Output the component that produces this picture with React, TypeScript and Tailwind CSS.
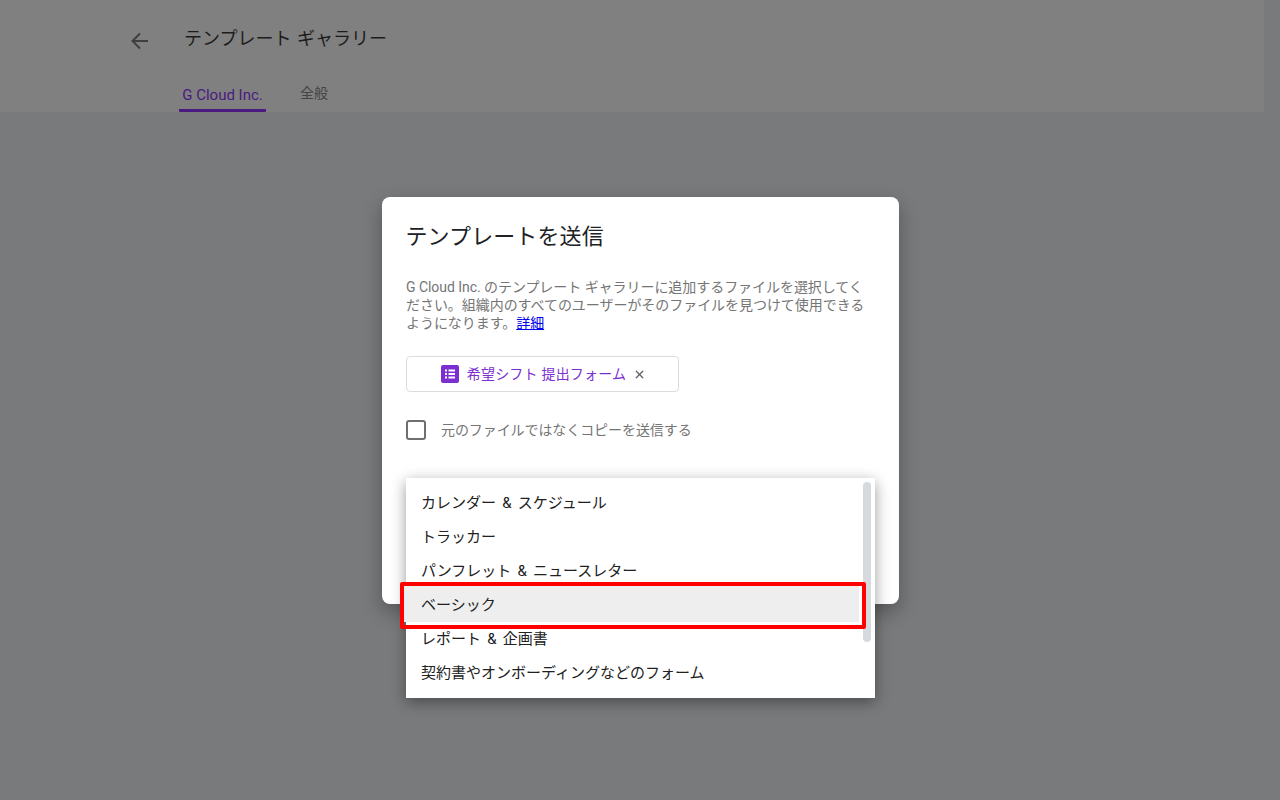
import { X } from 'lucide-react';

const categories = [
  'カレンダー & スケジュール',
  'トラッカー',
  'パンフレット & ニュースレター',
  'ベーシック',
  'レポート & 企画書',
  '契約書やオンボーディングなどのフォーム',
];

function FormsIcon() {
  return (
    <svg width="18" height="18" viewBox="0 0 18 18" className="shrink-0">
      <rect width="18" height="18" rx="2" fill="#7b2fd0" />
      <rect x="4" y="4.5" width="2" height="2" fill="#fff" />
      <rect x="7.5" y="4.5" width="6.5" height="2" fill="#fff" />
      <rect x="4" y="8" width="2" height="2" fill="#fff" />
      <rect x="7.5" y="8" width="6.5" height="2" fill="#fff" />
      <rect x="4" y="11.5" width="2" height="2" fill="#fff" />
      <rect x="7.5" y="11.5" width="6.5" height="2" fill="#fff" />
    </svg>
  );
}

export default function App() {
  return (
    <div className="relative h-[800px] w-[1280px] overflow-hidden bg-[#797a7c] font-['Roboto','Noto_Sans_CJK_JP',sans-serif]">
      <header className="h-[112px] w-[1264px] bg-[#808080]">
        <div className="flex h-[75px] items-start pl-[129px] pt-[29px]">
          <svg width="22" height="24" viewBox="0 0 22 24" className="text-[#3f3f3f]" fill="none" stroke="currentColor" strokeWidth="2">
            <path d="M19 12H4M11 4.500 3.500 12l7.500 7.500" />
          </svg>
          <h1 className="ml-[33px] mt-px text-lg leading-[18px] text-[#1c1c1c] [word-spacing:1px]">テンプレート ギャラリー</h1>
        </div>
        <nav className="flex h-[37px] pl-[179px]">
          <div className="flex h-[37px] w-[87px] items-center justify-center rounded-b-[1px] border-b-[3px] border-[#4a1a80] pt-[7px] text-[15px] text-[#4a1a80]">G Cloud Inc.</div>
          <div className="ml-[34px] pt-[8px] text-sm leading-5 text-[#444444]">全般</div>
        </nav>
      </header>

      <div className="absolute left-[382px] top-[197px] h-[407px] w-[517px] rounded-lg bg-white p-6 shadow-[0_8px_20px_rgba(0,0,0,0.3)]">
        <h2 className="-ml-[0.5px] mt-px text-[22px] leading-[30px] tracking-[0.1px] text-[#202124]">テンプレートを送信</h2>
        <p className="mt-[26px] w-[465px] text-sm leading-[18px] tracking-[-0.05px] text-[#757575]">
          G Cloud Inc. のテンプレート ギャラリーに追加するファイルを選択してください。組織内のすべてのユーザーがそのファイルを見つけて使用できるようになります。<a className="text-[#0000ee] underline">詳細</a>
        </p>
        <div className="mt-[24px] flex h-9 w-[273px] items-center justify-center rounded border border-[#dadce0] pl-[2px]">
          <FormsIcon />
          <span className="ml-2 text-sm tracking-[0.2px] text-[#7b2fd0]">希望シフト 提出フォーム</span>
          <X className="ml-[7px] text-[#5f6368]" size={13} strokeWidth={2.500} />
        </div>
        <label className="mt-[28px] flex items-center">
          <span className="h-5 w-5 rounded-[3px] border-2 border-[#6f6f6f]" />
          <span className="ml-[15px] text-sm tracking-[-0.08px] text-[#757575]">元のファイルではなくコピーを送信する</span>
        </label>
      </div>

      <div className="absolute left-[406px] top-[478px] h-[220px] w-[469px] bg-white pb-[7px] pt-[8px] shadow-[0_4px_14px_rgba(0,0,0,0.4)]">
        {categories.map((name) => (
          <div
            key={name}
            className={
              name === 'ベーシック'
                ? 'relative -ml-[2px] -mt-[2px] mr-[16px] flex h-[36px] items-center bg-[#eeeeee] pl-[17px] pt-[2px] text-[15px] text-[#212121] [word-spacing:2.500px]'
                : 'flex h-[34px] items-center pl-[15px] text-[15px] text-[#212121] [word-spacing:2.500px]'
            }
          >
            {name}
          </div>
        ))}
        <div className="absolute right-[4px] top-[4px] h-[160px] w-2 rounded bg-[#d6d9dd]" />
      </div>

      <div className="absolute left-[400px] top-[582px] h-[47px] w-[466px] rounded-[2px] border-[4px] border-[#ff0000]" />
    </div>
  );
}
